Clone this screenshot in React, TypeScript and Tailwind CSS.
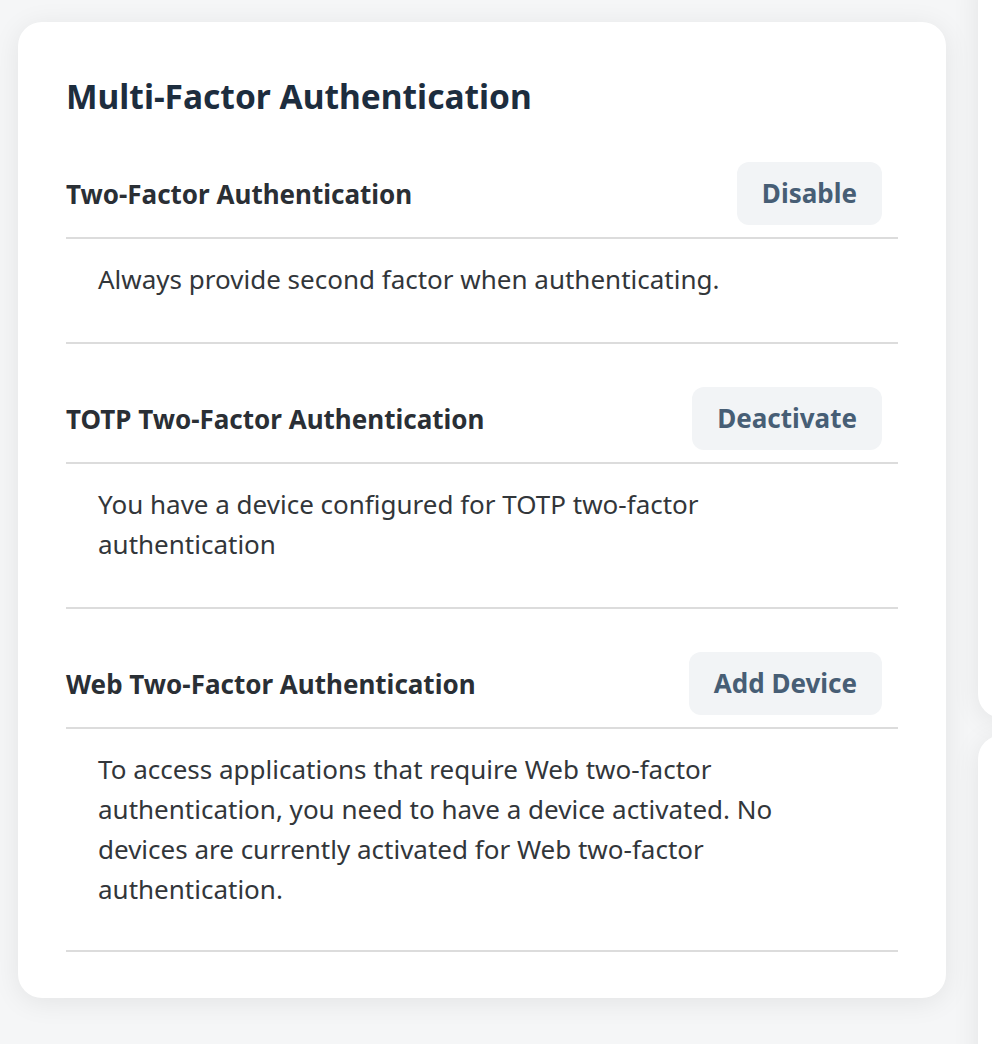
import type { ReactNode } from 'react';

interface Section {
  title: string;
  action: string;
  body: ReactNode;
}

const sections: Section[] = [
  {
    title: 'Two-Factor Authentication',
    action: 'Disable',
    body: 'Always provide second factor when authenticating.',
  },
  {
    title: 'TOTP Two-Factor Authentication',
    action: 'Deactivate',
    body: 'You have a device configured for TOTP two-factor authentication',
  },
  {
    title: 'Web Two-Factor Authentication',
    action: 'Add Device',
    body: 'To access applications that require Web two-factor authentication, you need to have a device activated. No devices are currently activated for Web two-factor authentication.',
  },
];

function SectionBlock({ title, action, body, last }: Section & { last?: boolean }) {
  return (
    <div>
      <div className="flex items-center justify-between pt-[43px] pb-[12px] pr-[16px] border-b-2 border-[#dcdcdc]">
        <h3 className="text-[26px] leading-[32px] font-bold text-[#2a2f35]">{title}</h3>
        <button className="h-[63px] px-[25px] rounded-[12px] bg-[#f2f4f6] text-[26px] font-bold text-[#475e75]">
          {action}
        </button>
      </div>
      <p
        className={`pl-[32px] pr-[110px] pt-[20px] text-[26px] leading-[40px] text-[#32363a] border-b-2 border-[#dcdcdc] ${
          last ? 'pb-[41px]' : 'pb-[43px]'
        }`}
      >
        {body}
      </p>
    </div>
  );
}

export default function App() {
  return (
    <div
      className="h-[1044px] bg-[#f5f6f7] overflow-hidden"
      style={{ fontFamily: '"Noto Sans", "Open Sans", Arial, sans-serif' }}
    >
      <div className="flex gap-[32px] pl-[18px] pt-[22px]">
        {/* main card */}
        <section className="w-[928px] shrink-0 h-[976px] bg-white rounded-[24px] shadow-[0_4px_28px_rgba(0,0,0,0.08)] px-[48px] pt-[48px]">
          <h2 className="text-[33.5px] leading-[52px] font-bold text-[#1d2d3e]">
            Multi-Factor Authentication
          </h2>
          <div className="-mt-[3px]">
            {sections.map((s, i) => (
              <SectionBlock key={s.title} {...s} last={i === sections.length - 1} />
            ))}
          </div>
        </section>

        {/* neighbouring cards, clipped at the right edge */}
        <div className="flex flex-col gap-[17px] -mt-[60px] shrink-0">
          <div className="w-[400px] h-[756px] bg-white rounded-[24px] shadow-[0_4px_28px_rgba(0,0,0,0.08)]" />
          <div className="w-[400px] h-[400px] bg-white rounded-[24px] shadow-[0_4px_28px_rgba(0,0,0,0.08)]" />
        </div>
      </div>
    </div>
  );
}
